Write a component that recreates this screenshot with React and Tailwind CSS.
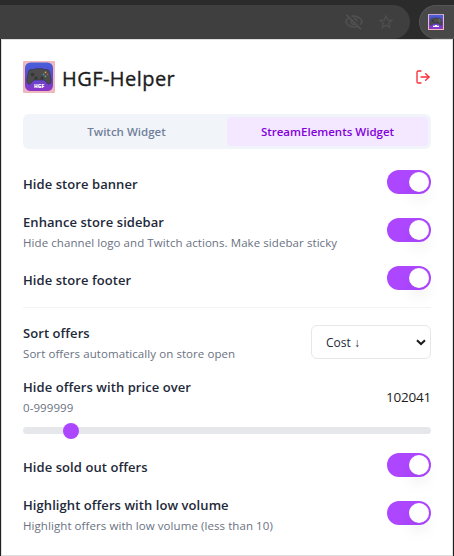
import { useState } from "react";
import { LogOut } from "lucide-react";
import { MdOutlineVisibilityOff, MdStarBorder } from "react-icons/md";

function Gamepad({ className, label = true }) {
  return (
    <svg viewBox="0 0 32 32" className={className}>
      <defs>
        <linearGradient id="pad" x1="0" y1="0" x2="0" y2="1">
          <stop offset="0" stopColor="#465fdc" />
          <stop offset="0.55" stopColor="#5d49cb" />
          <stop offset="1" stopColor="#8e35c8" />
        </linearGradient>
      </defs>
      <rect width="32" height="32" rx="1" fill="#efb8bd" />
      <rect x="2" y="1.5" width="28" height="28.5" rx={label ? 5.5 : 1} fill="url(#pad)" />
      <path
        d="M8 8.5h3l1.5-.8h7l1.500.8h3q2 0 2.600 2.500l1.400 7.500q.6 4.500-2.200 4.500-1.500 0-2.800-2l-1.700-2h-10.600l-1.700 2q-1.300 2-2.800 2-2.800 0-2.200-4.500l1.400-7.500q.6-2.500 2.600-2.500z"
        fill="#4c4c4e"
        stroke="#303043"
        strokeWidth="0.6"
      />
      <circle cx="9.500" cy="13.500" r="1.800" fill="#353538" />
      <circle cx="13" cy="17" r="1.600" fill="#353538" />
      <circle cx="19" cy="17" r="1.600" fill="#353538" />
      <circle cx="22.500" cy="11.300" r="0.900" fill="#d6ad38" />
      <circle cx="20.500" cy="13.300" r="0.900" fill="#4c91d4" />
      <circle cx="24.500" cy="13.300" r="0.900" fill="#d44b48" />
      <circle cx="22.500" cy="15.300" r="0.900" fill="#50b96a" />
      {label ? (
        <text x="16" y="27" textAnchor="middle" fontSize="5" fontWeight="800" fill="#fff" fontFamily="Open Sans, sans-serif">
          HGF
        </text>
      ) : (
        <path d="M10 26v-2.500h4v-1.500h4v1.500h4v2.500z" fill="#fff" />
      )}
    </svg>
  );
}

function Toggle({ label }) {
  const [on, setOn] = useState(true);
  return (
    <button
      role="switch"
      aria-checked={on}
      aria-label={label}
      onClick={() => setOn(!on)}
      className={`flex h-6 w-11 shrink-0 items-center rounded-full px-0.5 ${on ? "justify-end bg-[#ad46ff]" : "justify-start bg-gray-200"}`}
    >
      <span className="size-5 rounded-full bg-white shadow-[0_10px_15px_-3px_rgba(0,0,0,0.1)]" />
    </button>
  );
}

function Label({ title, hint }) {
  return (
    <div className="flex flex-col whitespace-nowrap">
      <span className="text-[13px] leading-5 font-semibold tracking-[0.07px] text-[#1e2939]">{title}</span>
      {hint && <span className="pt-px text-[11.5px] leading-5 tracking-[0.075px] text-[#6a7282]">{hint}</span>}
    </div>
  );
}

export default function App() {
  const [sort, setSort] = useState("cost");
  return (
    <div className="flex h-[556px] w-[454px] flex-col overflow-hidden bg-[#202020] font-['Open_Sans','Noto_Sans',sans-serif]">
      <div className="flex h-[39px] shrink-0 justify-between bg-[#2b2b2b] pt-[5px]">
        <div className="flex h-[34px] w-[410px] items-center justify-end gap-[13px] rounded-r-full bg-[#3f3f3f] pr-[15px]">
          <MdOutlineVisibilityOff className="size-5 text-[#505050]" />
          <MdStarBorder className="size-[18px] text-[#505050]" />
        </div>
        <div className="flex h-[34px] w-[35px] items-center rounded-l-full border border-r-0 border-[#555] bg-[#484848] pl-2">
          <Gamepad className="size-4" label={false} />
        </div>
      </div>

      <main className="mr-px ml-px flex h-[517px] shrink-0 flex-col border border-[#dedede] bg-white px-[21px] pt-[21px]">
        <header className="flex h-8 items-center">
          <Gamepad className="size-8" />
          <h1 className="ml-[7px] pt-[3px] text-[20px] leading-7 font-medium tracking-[0.45px] text-[#1c1c1c] [-webkit-text-stroke:0.35px_#1c1c1c]">
            HGF-Helper
          </h1>
          <LogOut className="ml-auto size-4 text-[#fb2c36]" strokeWidth={2} />
        </header>

        <nav className="mt-[21px] grid h-[35px] shrink-0 grid-cols-2 rounded-md bg-[#f1f5f9] p-[3px] text-[11.5px] font-semibold">
          <button className="rounded pt-px text-[#71809a]">Twitch Widget</button>
          <button className="rounded bg-[#f3e8ff] pt-px text-[#8200db]">StreamElements Widget</button>
        </nav>

        <section className="flex h-[159px] shrink-0 flex-col border-b border-[#f3f4f6] pt-[21px]">
          <div className="flex h-12 items-start justify-between">
            <div className="pt-1"><Label title="Hide store banner" /></div>
            <Toggle label="Hide store banner" />
          </div>
          <div className="flex h-12 items-start justify-between">
            <div className="-mt-[6px]">
              <Label title="Enhance store sidebar" hint="Hide channel logo and Twitch actions. Make sidebar sticky" />
            </div>
            <Toggle label="Enhance store sidebar" />
          </div>
          <div className="flex items-start justify-between">
            <div className="pt-1"><Label title="Hide store footer" /></div>
            <Toggle label="Hide store footer" />
          </div>
        </section>

        <section className="flex flex-col">
          <div className="flex h-[69px] items-start justify-between pt-[17px]">
            <div className="-mt-[2px]"><Label title="Sort offers" hint="Sort offers automatically on store open" /></div>
            <div className="grid h-[34px] w-[120px] grid-cols-1 items-center rounded-md border border-[#e5e7eb]">
              <select
                value={sort}
                onChange={(e) => setSort(e.target.value)}
                className="col-start-1 row-start-1 h-8 appearance-none bg-transparent pt-0.5 pl-[14px] text-[12px] text-[#1e2939] outline-none"
              >
                <option value="cost">Cost ↓</option>
                <option value="name">Name ↓</option>
              </select>
              <svg viewBox="0 0 10 7" className="pointer-events-none col-start-1 row-start-1 mr-1 h-[7px] w-[10px] justify-self-end">
                <path d="M1 1.200 5 5l4-3.800" fill="none" stroke="#1c1c1c" strokeWidth="2" />
              </svg>
            </div>
          </div>
          <div className="flex h-[50px] items-start justify-between">
            <Label title="Hide offers with price over" hint="0-999999" />
            <span className="pt-[10px] text-[13.5px] leading-5 tracking-[-0.2px] text-[#1c1c1c]">102041</span>
          </div>
          <div className="flex h-[7px] items-center rounded-full bg-[#e5e7eb] pl-10">
            <span className="size-4 shrink-0 rounded-full bg-[#ad46ff]" />
          </div>
          <div className="mt-[19px] flex h-12 items-start justify-between">
            <div className="pt-1"><Label title="Hide sold out offers" /></div>
            <Toggle label="Hide sold out offers" />
          </div>
          <div className="flex items-start justify-between">
            <div className="-mt-[6px]">
              <Label title="Highlight offers with low volume" hint="Highlight offers with low volume (less than 10)" />
            </div>
            <Toggle label="Highlight offers with low volume" />
          </div>
        </section>
      </main>
    </div>
  );
}
